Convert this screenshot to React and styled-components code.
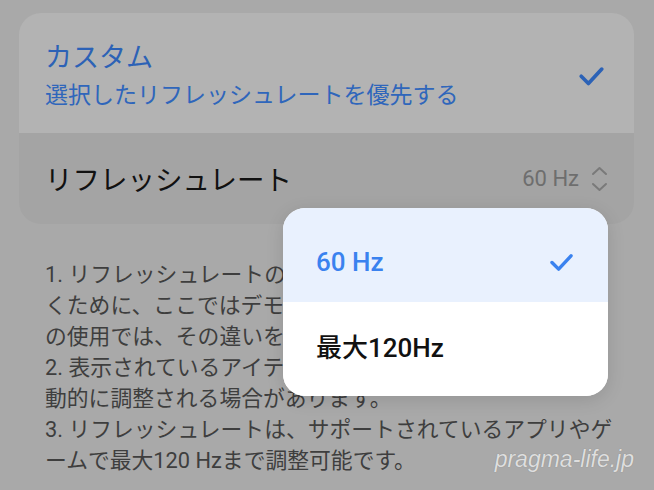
import React from 'react';
import styled, { createGlobalStyle } from 'styled-components';

const GlobalStyle = createGlobalStyle`
  html, body {
    margin: 0;
    padding: 0;
    background: #a9a9a9;
  }
  body {
    font-family: Roboto, "Noto Sans CJK JP", sans-serif;
    width: 654px;
    height: 490px;
    overflow: hidden;
  }
`;

const Screen = styled.div`
  position: relative;
  width: 654px;
  height: 490px;
  padding: 13px 20px 0 19px;
  box-sizing: border-box;
`;

const Card = styled.div`
  border-radius: 22px;
  overflow: hidden;
`;

const Section = styled.div`
  display: flex;
  align-items: center;
  justify-content: space-between;
  height: ${(p) => p.h}px;
  padding: ${(p) => p.pad || '0 26px'};
  background: ${(p) => p.bg};
  box-sizing: border-box;
`;

const Texts = styled.div`
  display: flex;
  flex-direction: column;
  gap: 4px;
`;

const Title = styled.div`
  color: #2c62b6;
  font-size: 27px;
  line-height: 36px;
  font-weight: 400;
`;

const Sub = styled.div`
  color: #2f66bb;
  font-size: 23px;
  line-height: 32px;
`;

const Label = styled.div`
  color: #111;
  font-size: 27.5px;
  line-height: 36px;
  padding-top: 4px;
`;

const Value = styled.div`
  display: flex;
  align-items: center;
  gap: 12px;
  color: #6e6e6e;
  font-size: 22px;
`;

const Notes = styled.div`
  margin-top: 35px;
  padding-left: 26px;
  color: #3e3e3e;
  font-size: 21.8px;
  line-height: 31px;
  white-space: nowrap;
`;

const Popup = styled.div`
  position: absolute;
  left: 283px;
  top: 208px;
  width: 325px;
  border-radius: 22px;
  overflow: hidden;
  background: #fff;
  box-shadow: 0 4px 18px rgba(0, 0, 0, 0.12);
`;

const Option = styled.div`
  display: flex;
  align-items: center;
  justify-content: space-between;
  height: 94px;
  box-sizing: border-box;
  padding: ${(p) => (p.selected ? '14px 34px 0 33px' : '0 34px 8px 33px')};
  background: ${(p) => (p.selected ? '#e9f1fe' : '#fff')};
  color: ${(p) => (p.selected ? '#3a82ef' : '#111')};
  font-size: 26px;
  font-weight: 500;
`;

const Watermark = styled.div`
  position: absolute;
  right: 20px;
  bottom: 17px;
  color: #dedede;
  font-family: "Liberation Sans", Arial, sans-serif;
  font-style: italic;
  font-size: 23px;
  text-shadow: 0 0 1px rgba(0, 0, 0, 0.25);
`;

const Check = ({ color, w = 26 }) => (
  <svg width={w} height={w * 0.8} viewBox="0 0 26 21">
    <polyline
      points="3,11 10,18 23,4"
      fill="none"
      stroke={color}
      strokeWidth="3.6"
      strokeLinecap="round"
      strokeLinejoin="round"
    />
  </svg>
);

const UpDown = () => (
  <svg width="17" height="26" viewBox="0 0 17 26">
    <g fill="none" stroke="#7a7a7a" strokeWidth="2" strokeLinecap="round" strokeLinejoin="round">
      <polyline points="2,8 8.5,2 15,8" />
      <polyline points="2,18 8.5,24 15,18" />
    </g>
  </svg>
);

const App = () => (
  <>
    <GlobalStyle />
    <Screen>
      <Card>
        <Section h={120} bg="#b3b3b3" pad="6px 29px 0 26px">
          <Texts>
            <Title>カスタム</Title>
            <Sub>選択したリフレッシュレートを優先する</Sub>
          </Texts>
          <Check color="#2c62b6" w={27} />
        </Section>
        <Section h={91} bg="#a4a4a4">
          <Label>リフレッシュレート</Label>
          <Value>
            60 Hz
            <UpDown />
          </Value>
        </Section>
      </Card>
      <Notes>
        1. リフレッシュレートの高低の違いを体感していただ
        <br />
        くために、ここではデモを表示しています。実際
        <br />
        の使用では、その違いを実感しにくい場合があります。
        <br />
        2. 表示されているアイテムは、デバイスの状態により自
        <br />
        動的に調整される場合があります。
        <br />
        3. リフレッシュレートは、サポートされているアプリやゲ
        <br />
        ームで最大120 Hzまで調整可能です。
      </Notes>
      <Popup>
        <Option selected>
          60 Hz
          <Check color="#3a82ef" w={25} />
        </Option>
        <Option>最大120Hz</Option>
      </Popup>
      <Watermark>pragma-life.jp</Watermark>
    </Screen>
  </>
);

export default App;
